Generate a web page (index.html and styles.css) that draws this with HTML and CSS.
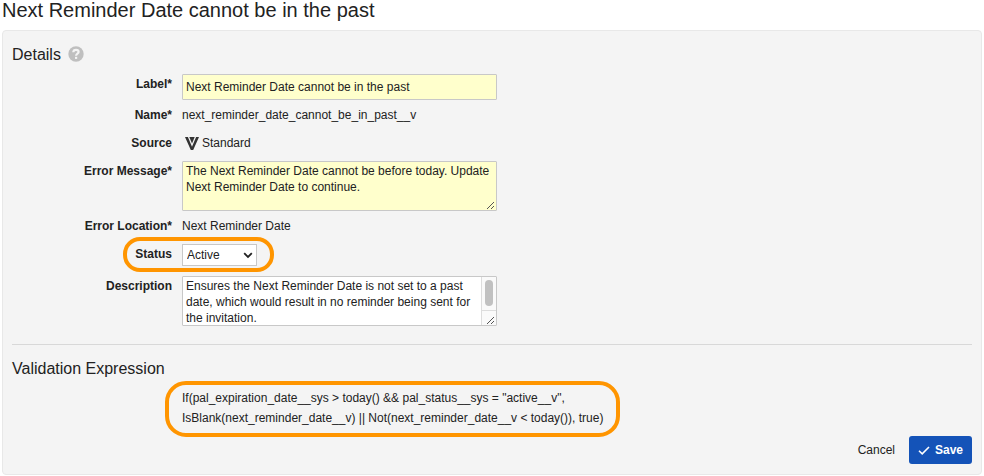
FILE: index.html
```html
<!DOCTYPE html>
<html lang="en">
<head>
    <meta charset="UTF-8">
    <meta name="viewport" content="width=device-width, initial-scale=1.0">
    <title>Next Reminder Date cannot be in the past</title>
    <link rel="stylesheet" href="styles.css">
</head>
<body>

    <h1 class="page-title">Next Reminder Date cannot be in the past</h1>

    <form class="panel">
        <h2 class="section-title">
            Details
            <svg class="help-icon" viewBox="0 0 16 16" width="16" height="16">
                <circle cx="8" cy="8" r="7.7" fill="#bfbfbf"/>
                <path d="M5.3 6.200C5.400 4.500 6.500 3.900 8 3.900c1.600 0 2.600.8 2.600 2.100C10.600 7.700 8.100 7.500 8.100 9.700" fill="none" stroke="#f4f4f4" stroke-width="2.200"/>
                <rect x="7" y="10.800" width="2.200" height="2.100" fill="#f4f4f4"/>
            </svg>
        </h2>

        <div class="row row-control">
            <label class="label" for="label">Label*</label>
            <input class="field input" type="text" id="label" value="Next Reminder Date cannot be in the past">
        </div>

        <div class="row row-name">
            <span class="label">Name*</span>
            <span class="value">next_reminder_date_cannot_be_in_past__v</span>
        </div>

        <div class="row row-source">
            <span class="label">Source</span>
            <span class="value source">
                <svg viewBox="0 0 14 13" width="14" height="13">
                    <path d="M0 0h2.900l4.100 9.800L11.100 0H14L8.200 13H5.800z" fill="#333"/>
                    <path d="M4.300 0h5.400L7 6.500z" fill="#333"/>
                </svg>
                Standard
            </span>
        </div>

        <div class="row row-control">
            <label class="label" for="message">Error Message*</label>
            <div class="field area required">
                <textarea class="area-text" id="message">The Next Reminder Date cannot be before today. Update Next Reminder Date to continue.</textarea>
                <svg class="grip" viewBox="0 0 9 9" width="9" height="9">
                    <path d="M1 8l7-7M5 8l3-3" stroke="#555" fill="none"/>
                </svg>
            </div>
        </div>

        <div class="row row-location">
            <span class="label">Error Location*</span>
            <span class="value">Next Reminder Date</span>
        </div>

        <div class="row row-control">
            <label class="label" for="status">Status</label>
            <div class="select">
                <select class="field select-box" id="status">
                    <option>Active</option>
                    <option>Inactive</option>
                </select>
                <svg class="chevron" viewBox="0 0 10 7" width="10" height="7">
                    <path d="M1.200 1.200L5 5l3.800-3.800" fill="none" stroke="#222" stroke-width="1.800"/>
                </svg>
            </div>
            <span class="highlight highlight-status"></span>
        </div>

        <div class="row row-control">
            <label class="label" for="description">Description</label>
            <div class="field area">
                <textarea class="area-text" id="description">Ensures the Next Reminder Date is not set to a past date, which would result in no reminder being sent for the invitation.</textarea>
                <div class="scrollbar">
                    <span class="track"><span class="thumb"></span></span>
                </div>
                <svg class="grip" viewBox="0 0 9 9" width="9" height="9">
                    <path d="M1 8l7-7M5 8l3-3" stroke="#555" fill="none"/>
                </svg>
            </div>
        </div>

        <hr class="divider">

        <h2 class="section-title">Validation Expression</h2>
        <div class="expression">
            <div>If(pal_expiration_date__sys &gt; today() &amp;&amp; pal_status__sys = "active__v",</div>
            <div>IsBlank(next_reminder_date__v) || Not(next_reminder_date__v &lt; today()), true)</div>
            <span class="highlight highlight-expression"></span>
        </div>

        <div class="actions">
            <button class="cancel" type="button">Cancel</button>
            <button class="save" type="submit">
                <svg viewBox="0 0 12 9" width="12" height="9">
                    <path d="M1 4.700l3.200 3.100L11 1" fill="none" stroke="#fff" stroke-width="1.600"/>
                </svg>
                Save
            </button>
        </div>
    </form>

</body>
</html>
```
FILE: styles.css
```css
* {
    box-sizing: border-box;
}
body {
    margin: 0;
    background: #fff;
    color: #222;
    font: 12px/16px "Liberation Sans", Arial, sans-serif;
}
.page-title {
    height: 30px;
    margin: 0;
    padding-left: 2px;
    font-size: 20px;
    font-weight: normal;
    line-height: 21px;
    white-space: nowrap;
}
.panel {
    width: 980px;
    height: 445px;
    margin-left: 2px;
    padding: 14px 9px 0;
    border: 1px solid #e8e8e8;
    border-radius: 4px;
    background: #f4f4f4;
}
.section-title {
    display: flex;
    align-items: center;
    gap: 7px;
    height: 20px;
    margin: 0;
    font-size: 16px;
    font-weight: normal;
    line-height: 20px;
}
.help-icon {
    margin-bottom: 2px;
}

/* rows */
.row {
    display: grid;
    grid-template-columns: 160px 315px;
    column-gap: 10px;
    position: relative;
    margin-top: 10px;
}
.label {
    font-weight: bold;
    text-align: right;
}
.row-control .label {
    padding-top: 2px;
}
.section-title + .row-control {
    margin-top: 9px;
}
.row-name,
.row-location {
    margin-top: 7px;
}
.row-source {
    margin-top: 12px;
}
.source {
    display: flex;
    align-items: center;
    gap: 3px;
    padding-left: 3px;
}

/* fields */
.field {
    border: 1px solid #c8c8c8;
    border-radius: 1px;
    background: #fff;
    color: #222;
}
.input {
    width: 315px;
    height: 26px;
    padding: 0 3px;
    background: #ffffcc;
    font: inherit;
}
.area {
    display: flex;
    position: relative;
    height: 50px;
}
.required {
    background: #ffffcc;
}
.area-text {
    flex: 1;
    height: 48px;
    padding: 1px 3px 0;
    border: 0;
    background: transparent;
    color: inherit;
    font: inherit;
    overflow: hidden;
    resize: none;
}
.grip {
    position: absolute;
    right: 1px;
    bottom: 0;
}
.scrollbar {
    width: 15px;
    border-left: 1px solid #ddd;
    background: #fafafa;
}
.track {
    display: block;
    height: 34px;
    padding: 3px;
    border-bottom: 1px solid #ddd;
}
.thumb {
    display: block;
    width: 8px;
    height: 26px;
    border-radius: 4px;
    background: #c1c1c1;
}
.select {
    position: relative;
    width: 75px;
    height: 22px;
}
.select-box {
    display: block;
    width: 75px;
    height: 22px;
    padding: 0 4px;
    border-radius: 0;
    appearance: none;
    font: inherit;
}
.chevron {
    position: absolute;
    top: 8px;
    right: 4px;
}

.divider {
    height: 1px;
    margin: 18px 0 14px;
    border: 0;
    background: #d8d8d8;
}
.expression {
    position: relative;
    width: 440px;
    margin: 9px 0 0 170px;
    line-height: 20px;
    white-space: nowrap;
}

/* orange callouts */
.highlight {
    position: absolute;
    border: 4px solid #ff9500;
    pointer-events: none;
}
.highlight-status {
    top: -7px;
    left: 111px;
    width: 151px;
    height: 35px;
    border-radius: 17px;
}
.highlight-expression {
    top: -7px;
    left: -17px;
    width: 455px;
    height: 56px;
    border-radius: 21px;
}

/* buttons */
.actions {
    display: flex;
    justify-content: flex-end;
    gap: 14px;
    margin-top: 8px;
}
.cancel,
.save {
    height: 28px;
    padding: 0;
    border: 0;
    background: none;
    color: #222;
    font: inherit;
}
.save {
    display: flex;
    align-items: center;
    justify-content: center;
    gap: 5px;
    width: 63px;
    border-radius: 3px;
    background: #1453b8;
    color: #fff;
    font-weight: bold;
}
```
